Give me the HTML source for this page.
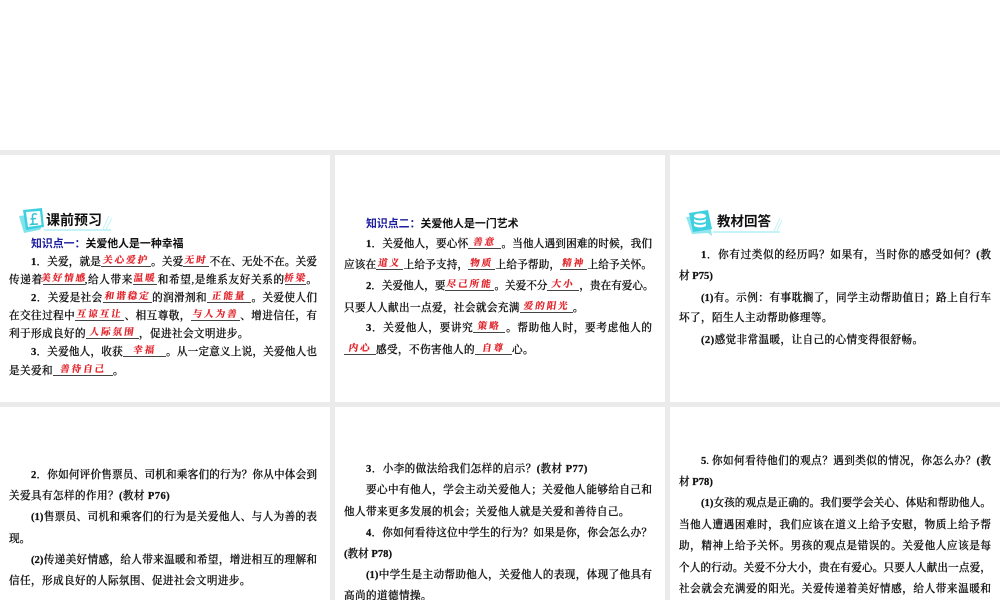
<!DOCTYPE html>
<html lang="zh">
<head>
<meta charset="utf-8">
<title>关爱他人</title>
<style>
html,body{margin:0;padding:0;background:#fff}
#w{position:relative;width:1000px;height:600px;overflow:hidden;background:#fff;filter:blur(.35px);
font-family:"Liberation Serif","Noto Serif CJK SC",serif;font-size:10.6px;color:#111}
.g{position:absolute;background:#ebebeb}
.l{position:absolute;margin-top:1px;height:16px;line-height:16px;white-space:nowrap;text-align:justify;text-align-last:justify;font-weight:500;-webkit-text-stroke:.25px #111}
.a{left:9px;width:308px}
.c{left:344px;width:308px}
.e{left:679px;width:312px}
.i{padding-left:22px;box-sizing:border-box}
.f{text-align-last:left}
.l em{font-style:normal;font-weight:700}
.h{position:absolute;margin-top:1px;height:16px;line-height:16px;white-space:nowrap;font-family:"Liberation Sans","Noto Sans CJK SC",sans-serif;font-weight:700;font-size:10.9px}
.h span{color:#1c1c9e}
.t{position:absolute;white-space:nowrap;font-family:"Liberation Sans","Noto Sans CJK SC",sans-serif;font-weight:700;font-size:14px;line-height:18px;color:#111}
b{display:inline-block;height:0;border-bottom:1px solid #444;vertical-align:-2px;position:relative;font-weight:700}
b i{position:absolute;left:-8px;right:-8px;bottom:-1px;text-align:center;text-align-last:center;font-style:normal;font-size:9.5px;line-height:11px;letter-spacing:2px;color:#e01f26;font-weight:700;-webkit-text-stroke:.2px #e01f26;transform:skewX(-8deg)}
svg{position:absolute}
</style>
</head>
<body>
<div id="w">
<div class="g" style="left:0;top:150px;width:1000px;height:5px"></div>
<div class="g" style="left:0;top:402px;width:1000px;height:5px"></div>
<div class="g" style="left:330px;top:150px;width:5px;height:450px"></div>
<div class="g" style="left:665px;top:150px;width:5px;height:450px"></div>

<svg style="left:15px;top:205px" width="100" height="32" viewBox="0 0 100 32">
<path d="M4 11 L9 28 L24 25 L26 24 L22 9Z" fill="#7fe3ec"/>
<path d="M8 5 L27 3 L29 22 L11 25Z" fill="#3fd0e0"/>
<path d="M11 7 L25 6 L26.500 20 L13 22Z" fill="#fff"/>
<path d="M22 9.500 C19 8 17 9 17.500 12 L18 18 L16 19.500 L23 19 M15.500 14 L21 13.500" fill="none" stroke="#35c4d6" stroke-width="1.500"/>
<path d="M29 25 H96" stroke="#a5ecf2" stroke-width="1.200"/>
<path d="M88 24 L94 11 M91 24 L97 13" stroke="#c6f2f6" stroke-width="1"/>
</svg>
<div class="t" style="left:46px;top:211px">课前预习</div>

<svg style="left:682px;top:207px" width="104" height="32" viewBox="0 0 104 32">
<path d="M4 10 L10 27 L26 26 L30 29 L29 22 L24 8Z" fill="#8fe6ee"/>
<path d="M7 6 L26 3 L30 22 L11 25Z" fill="#3fd0e0"/>
<ellipse cx="18" cy="9" rx="6" ry="2.500" fill="#fff"/>
<path d="M12 11.500 C13 14 23 14 24 11.500 V14 C23 16.500 13 16.500 12 14Z" fill="#fff"/>
<path d="M12 16 C13 18.500 23 18.500 24 16 V18.500 C23 21 13 21 12 18.500Z" fill="#fff"/>
<path d="M31 25 H98" stroke="#a5ecf2" stroke-width="1.200"/>
<path d="M92 24 L98 11 M95 24 L100 13" stroke="#c6f2f6" stroke-width="1"/>
</svg>
<div class="t" style="left:717px;top:213px;font-size:13.5px">教材回答</div>

<div class="h" style="left:31px;top:235px"><span>知识点一：</span>关爱他人是一种幸福</div>
<div class="l a i" style="top:254px"><em>1</em>．关爱，就是<b style="width:50px"><i>关心爱护</i></b>。关爱<b style="width:26px"><i>无时</i></b>不在、无处不在。关爱</div>
<div class="l a" style="top:272px">传递着<b style="width:42px"><i>美好情感</i></b>,给人带来<b style="width:24px"><i>温暖</i></b>和希望,是维系友好关系的<b style="width:21px"><i>桥梁</i></b>。</div>
<div class="l a i" style="top:290px"><em>2</em>．关爱是社会<b style="width:49px"><i>和谐稳定</i></b>的润滑剂和<b style="width:44px"><i>正能量</i></b>。关爱使人们</div>
<div class="l a" style="top:308px">在交往过程中<b style="width:49px"><i>互谅互让</i></b>、相互尊敬，<b style="width:49px"><i>与人为善</i></b>、增进信任，有</div>
<div class="l a f" style="top:326px;letter-spacing:.4px">利于形成良好的<b style="width:53px"><i>人际氛围</i></b>，促进社会文明进步。</div>
<div class="l a i" style="top:344px"><em>3</em>．关爱他人，收获<b style="width:43px"><i>幸福</i></b>。从一定意义上说，关爱他人也</div>
<div class="l a f" style="top:363px;letter-spacing:.4px">是关爱和<b style="width:60px"><i>善待自己</i></b>。</div>

<div class="h" style="left:366px;top:215px"><span>知识点二：</span>关爱他人是一门艺术</div>
<div class="l c i" style="top:236px"><em>1</em>．关爱他人，要心怀<b style="width:33px"><i>善意</i></b>。当他人遇到困难的时候，我们</div>
<div class="l c" style="top:257px">应该在<b style="width:27px"><i>道义</i></b>上给予支持，<b style="width:27px"><i>物质</i></b>上给予帮助，<b style="width:27px"><i>精神</i></b>上给予关怀。</div>
<div class="l c i" style="top:278px"><em>2</em>．关爱他人，要<b style="width:49px"><i>尽己所能</i></b>。关爱不分<b style="width:32px"><i>大小</i></b>，贵在有爱心。</div>
<div class="l c f" style="top:300px;letter-spacing:.4px">只要人人献出一点爱，社会就会充满<b style="width:53px"><i>爱的阳光</i></b>。</div>
<div class="l c i" style="top:320px"><em>3</em>．关爱他人，要讲究<b style="width:32px"><i>策略</i></b>。帮助他人时，要考虑他人的</div>
<div class="l c f" style="top:342px;letter-spacing:.4px"><b style="width:32px"><i>内心</i></b>感受，不伤害他人的<b style="width:37px"><i>自尊</i></b>心。</div>

<div class="l e i" style="top:247px"><em>1</em>．你有过类似的经历吗？如果有，当时你的感受如何？<em>(</em>教</div>
<div class="l e f" style="top:268px">材 <em>P75)</em></div>
<div class="l e i" style="top:290px"><em>(1)</em>有。示例：有事耽搁了，同学主动帮助值日；路上自行车</div>
<div class="l e f" style="top:310px;letter-spacing:.4px">坏了，陌生人主动帮助修理等。</div>
<div class="l e i f" style="top:332px;letter-spacing:.4px"><em>(2)</em>感觉非常温暖，让自己的心情变得很舒畅。</div>

<div class="l a i" style="top:467px"><em>2</em>．你如何评价售票员、司机和乘客们的行为？你从中体会到</div>
<div class="l a f" style="top:488px;letter-spacing:.4px">关爱具有怎样的作用？<em>(</em>教材 <em>P76)</em></div>
<div class="l a i" style="top:509px"><em>(1)</em>售票员、司机和乘客们的行为是关爱他人、与人为善的表</div>
<div class="l a f" style="top:531px">现。</div>
<div class="l a i" style="top:552px"><em>(2)</em>传递美好情感，给人带来温暖和希望，增进相互的理解和</div>
<div class="l a f" style="top:573px;letter-spacing:.4px">信任，形成良好的人际氛围、促进社会文明进步。</div>

<div class="l c i f" style="top:461px;letter-spacing:.4px"><em>3</em>．小李的做法给我们怎样的启示？<em>(</em>教材 <em>P77)</em></div>
<div class="l c i" style="top:482px">要心中有他人，学会主动关爱他人；关爱他人能够给自己和</div>
<div class="l c f" style="top:504px;letter-spacing:.4px">他人带来更多发展的机会；关爱他人就是关爱和善待自己。</div>
<div class="l c i" style="top:525px"><em>4</em>．你如何看待这位中学生的行为？如果是你，你会怎么办？</div>
<div class="l c f" style="top:546px"><em>(</em>教材 <em>P78)</em></div>
<div class="l c i" style="top:567px"><em>(1)</em>中学生是主动帮助他人，关爱他人的表现，体现了他具有</div>
<div class="l c f" style="top:588px;letter-spacing:.4px">高尚的道德情操。</div>

<div class="l e i" style="top:453px"><em>5</em>. 你如何看待他们的观点？遇到类似的情况，你怎么办？<em>(</em>教</div>
<div class="l e f" style="top:474px">材 <em>P78)</em></div>
<div class="l e i" style="top:495px"><em>(1)</em>女孩的观点是正确的。我们要学会关心、体贴和帮助他人。</div>
<div class="l e" style="top:517px">当他人遭遇困难时，我们应该在道义上给予安慰，物质上给予帮</div>
<div class="l e" style="top:538px">助，精神上给予关怀。男孩的观点是错误的。关爱他人应该是每</div>
<div class="l e" style="top:560px">个人的行动。关爱不分大小，贵在有爱心。只要人人献出一点爱，</div>
<div class="l e" style="top:581px">社会就会充满爱的阳光。关爱传递着美好情感，给人带来温暖和</div>
</div>
</body>
</html>
